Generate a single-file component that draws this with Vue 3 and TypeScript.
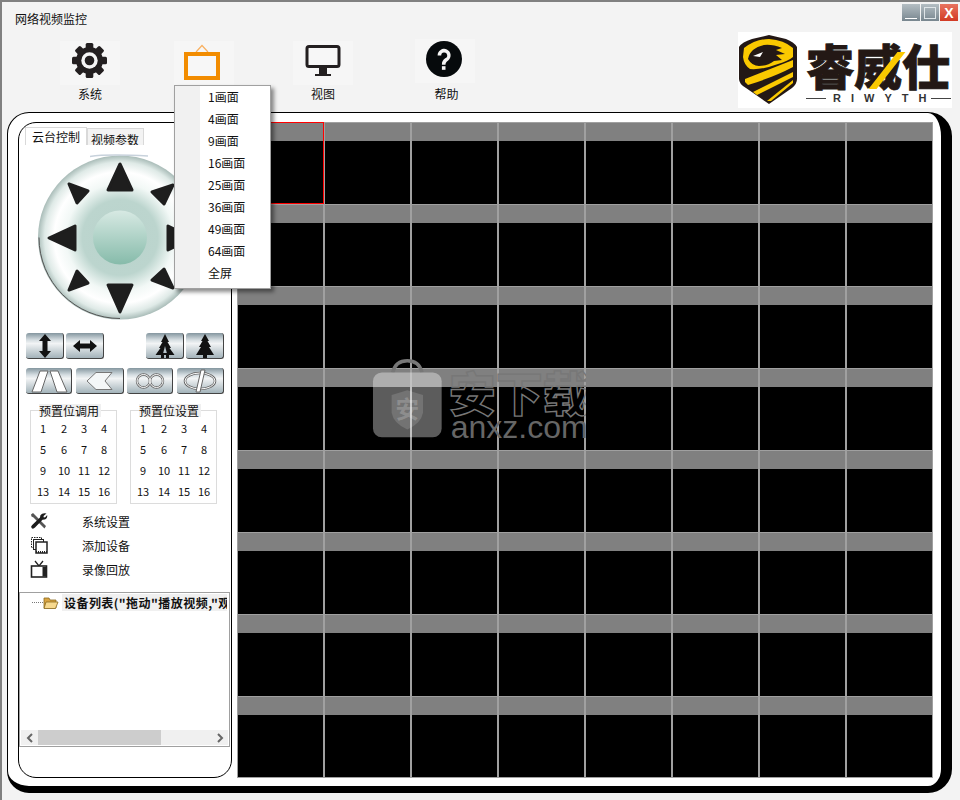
<script setup lang="ts">
const navItems = ['系统', '', '视图', '帮助']
const menuItems = ['1画面', '4画面', '9画面', '16画面', '25画面', '36画面', '49画面', '64画面', '全屏']
const presets = Array.from({ length: 16 }, (_, i) => i + 1)
const cells = Array.from({ length: 64 }, (_, i) => i)
const tools = ['系统设置', '添加设备', '录像回放']
const groups = ['预置位调用', '预置位设置']
</script>

<template>
  <div class="win">
    <!-- title + toolbar -->
    <header class="head">
      <div class="head-left">
        <div class="title">网络视频监控</div>
        <nav class="nav">
          <div v-for="(label, i) in navItems" :key="i" class="nav-item" :class="`nav-${i}`">
            <div class="nav-tile">
              <svg v-if="i === 0" width="40" height="40" viewBox="0 0 40 40">
                <g transform="translate(-0.5 -2.5)">
                  <g fill="#231f20">
                    <circle cx="20" cy="20" r="13.5" />
                    <rect v-for="a in [0, 45, 90, 135, 180, 225, 270, 315]" :key="a" x="16.2" y="2.5" width="7.6" height="8" rx="1.5" :transform="`rotate(${a} 20 20)`" />
                  </g>
                  <circle cx="20" cy="20" r="8.2" fill="#f5f5f5" />
                  <circle cx="20" cy="20" r="4.8" fill="#231f20" />
                </g>
              </svg>
              <svg v-else-if="i === 1" width="40" height="40" viewBox="0 0 40 40">
                <path d="M12 9 L18 2.5 L24 9" fill="none" stroke="#f8b060" stroke-width="1.2" />
                <rect x="2" y="11" width="32" height="24" fill="#f7f7f7" stroke="#f28c00" stroke-width="4" />
              </svg>
              <svg v-else-if="i === 2" width="40" height="40" viewBox="0 0 40 40">
                <rect x="4" y="3.5" width="32" height="20" rx="2" fill="#f7f7f7" stroke="#231f20" stroke-width="3" />
                <path d="M16 25h8v6h4v2H12v-2h4z" fill="#231f20" />
              </svg>
              <svg v-else width="40" height="40" viewBox="0 0 40 40">
                <circle cx="19" cy="20" r="18" fill="#060a0c" />
                <path d="M12.6 16.4a6.5 6.5 0 1 1 10.6 5c-2 1.6-2.7 2.4-2.7 4.3h-3.6c0-3.2 1-4.5 3.3-6.4a3 3 0 1 0-4-2.9z" fill="#f5f5f5" />
                <rect x="16.9" y="27.2" width="3.6" height="3.6" fill="#f5f5f5" />
              </svg>
            </div>
            <div class="nav-label">{{ label }}</div>
          </div>
        </nav>
      </div>

      <div class="head-right">
        <div class="win-btns">
          <div class="win-btn"><span class="ico-min"></span></div>
          <div class="win-btn"><span class="ico-max"></span></div>
          <div class="win-btn close">X</div>
        </div>
        <div class="logo">
          <svg class="shield" width="60" height="70" viewBox="0 0 60 70">
            <path d="M31 0 L48 4 Q56 7 59 12 V44 Q59 49 54 53 L31 69 L8 53 Q1 49 1 44 V12 Q4 7 14 4 Z" fill="#231815" />
            <path d="M6 13 Q18 4 31 4 Q46 5 55 13 V22 Q50 26 40 29 Q24 35 12 34 Q6 30 5 22 Z" fill="#fbc900" />
            <path d="M10 24 Q12 13 26 10 Q34 9 44 13 L38 15 L47 19 L38 20 L44 25 L36 26 Q30 31 21 31 Q14 31 10 24 Z" fill="#231815" />
            <path d="M15 21 L25 17 L22 22 Z" fill="#fff" />
            <path d="M7 44 L55 25 V32 Q36 42 10 50 L7 47 Z" fill="#fbc900" />
            <path d="M15 57 L55 37 V42 L19 60 Z" fill="#fbc900" />
            <path d="M29 66 L55 45 V48 L33 66 Z" fill="#fbc900" />
          </svg>
          <div class="brand">
            <div class="brand-cn">睿威<i class="slash"></i>仕</div>
            <div class="brand-en"><span class="rule"></span><span class="en-text">RIWYTH</span><span class="rule"></span></div>
          </div>
        </div>
      </div>
    </header>

    <!-- main panel -->
    <main class="panel">
      <aside class="side">
        <div class="tabs">
          <div class="tab active">云台控制</div>
          <div class="tab">视频参数</div>
        </div>

        <div class="pad-wrap">
          <svg width="166" height="168" viewBox="0 0 166 168">
            <defs>
              <radialGradient id="disc" cx="50%" cy="50%" r="50%">
                <stop offset="0" stop-color="#b9d3cc" />
                <stop offset="0.46" stop-color="#bcd5ce" />
                <stop offset="0.66" stop-color="#f2f8f6" />
                <stop offset="0.8" stop-color="#ffffff" />
                <stop offset="0.92" stop-color="#dfeae7" />
                <stop offset="1" stop-color="#a9bcb8" />
              </radialGradient>
              <linearGradient id="knob" x1="0" y1="0" x2="0" y2="1">
                <stop offset="0" stop-color="#d7e9e3" />
                <stop offset="1" stop-color="#86bbaa" />
              </linearGradient>
            </defs>
            <circle cx="83" cy="83.5" r="82" fill="url(#disc)" />
            <path d="M2 83.5a81 81 0 0 0 81 81" fill="none" stroke="#555" stroke-width="1" />
            <path d="M53 2.5 Q70 0 111 2" fill="none" stroke="#c8d2dc" stroke-width="1.5" />
            <circle cx="83" cy="83.5" r="27" fill="url(#knob)" />
            <g fill="#1e1e1e" stroke="#1e1e1e" stroke-width="3" stroke-linejoin="round">
              <path d="M83 10 L71 36 H95 Z" />
              <path d="M83 158 L71 131 H95 Z" />
              <path d="M12 84 L38 72 V96 Z" />
              <path d="M156 84 L131 72 V96 Z" />
              <path d="M32 30 L51 37 L40 49 Z" />
              <path d="M136 31 L115 38 L127 50 Z" />
              <path d="M32 136 L51 129 L40 117 Z" />
              <path d="M136 134 L115 126 L127 115 Z" />
            </g>
          </svg>
        </div>

        <div class="btn-row top">
          <div class="btn w38">
            <svg width="14" height="24" viewBox="0 0 14 24"><path d="M7 0 L13 7 H9.5 V17 H13 L7 24 L1 17 H4.5 V7 H1 Z" fill="#111" /></svg>
          </div>
          <div class="btn w38">
            <svg width="24" height="14" viewBox="0 0 24 14"><path d="M0 7 L7 1 V4.5 H17 V1 L24 7 L17 13 V9.5 H7 V13 Z" fill="#111" /></svg>
          </div>
          <div class="grow"></div>
          <div class="btn w38">
            <svg width="22" height="24" viewBox="0 0 22 24"><path d="M11 0 L15 8 H13.5 L17 14 H15.5 L20.5 21 H15 V24 H12 V21 H10 V24 H7 V21 H1.5 L6.5 14 H5 L8.5 8 H7 Z" fill="#111" /><path d="M11 12 L9.2 19 H12.8 Z" fill="#b9c6cc" /></svg>
          </div>
          <div class="btn w38">
            <svg width="18" height="24" viewBox="0 0 18 24"><path d="M9 0 L13 7 H11.5 L15 13 H13 L18 21 H11 V24 H7 V21 H0 L5 13 H3 L6.5 7 H5 Z" fill="#111" /></svg>
          </div>
        </div>

        <div class="btn-row second">
          <div class="btn w46 gap-after">
            <svg width="38" height="24" viewBox="0 0 38 24"><path d="M10 2 H18 L11 23 H2 Z M20 2 H28 L37 23 H27 Z" fill="#fff" stroke="#666" stroke-width="1" /></svg>
          </div>
          <div class="btn w48">
            <svg width="28" height="18" viewBox="0 0 28 18"><path d="M10 0.5 H26 L19 9 L26 17.5 H10 L1 9 Z" fill="#f4f7f8" stroke="#777" stroke-width="1" /></svg>
          </div>
          <div class="btn w46 gap-after">
            <svg width="30" height="16" viewBox="0 0 30 16"><g fill="none" stroke="#666" stroke-width="2.4"><circle cx="8.5" cy="8" r="6.5" /><circle cx="21.5" cy="8" r="6.5" /></g><g fill="none" stroke="#fff" stroke-width="1"><circle cx="8.5" cy="8" r="6.5" /><circle cx="21.5" cy="8" r="6.5" /></g></svg>
          </div>
          <div class="btn w47">
            <svg width="34" height="24" viewBox="0 0 34 24"><ellipse cx="17" cy="12" rx="15" ry="8" fill="none" stroke="#666" stroke-width="2.6" /><ellipse cx="17" cy="12" rx="15" ry="8" fill="none" stroke="#fff" stroke-width="1" /><path d="M18 1 H22 L17 23 H13 Z" fill="#fff" stroke="#666" stroke-width="1" /></svg>
          </div>
        </div>

        <div class="presets">
          <fieldset v-for="g in groups" :key="g" class="preset-box">
            <legend>{{ g }}</legend>
            <div class="num-grid">
              <span v-for="n in presets" :key="n">{{ n }}</span>
            </div>
          </fieldset>
        </div>

        <ul class="tools">
          <li v-for="(t, i) in tools" :key="t">
            <svg width="18" height="18" viewBox="0 0 18 18">
              <g v-if="i === 0">
                <path d="M1 2.5 L3 1 L5 3 L16 14 L14.5 16.5 L3.5 5.5 L1.5 4.5 Z" fill="#555" />
                <path d="M16.5 1.5 L13.5 4 L13.8 5.5 L15.2 5.2 L17.2 3 Q17.6 6.6 14.6 7.6 L12.5 7.8 L5 15.6 Q3 17.6 1.6 16 Q0.4 14.6 2.2 13 L10 5.4 L10.4 3.2 Q12.4 0.6 16.5 1.5 Z" fill="#1c1c1c" />
              </g>
              <g v-else-if="i === 1" fill="#fff" stroke="#222" stroke-width="1">
                <rect x="1.5" y="1.5" width="10" height="10" stroke-dasharray="1.5 1" />
                <rect x="3.5" y="3.5" width="10" height="10" />
                <rect x="6" y="6" width="11" height="11" stroke-width="1.5" />
                <path d="M6 16h11" stroke-width="2" stroke-dasharray="1 1" />
              </g>
              <g v-else>
                <path d="M5 1 L9 6 L13 1" fill="none" stroke="#222" stroke-width="1.3" />
                <rect x="1.5" y="6" width="15" height="11" fill="#fff" stroke="#222" stroke-width="1.6" />
                <rect x="12.5" y="7" width="3.5" height="9.5" fill="#222" />
              </g>
            </svg>
            <span>{{ t }}</span>
          </li>
        </ul>

        <div class="tree">
          <div class="tree-row">
            <span class="dots"></span>
            <svg width="16" height="14" viewBox="0 0 16 14">
              <path d="M1 2h5l1 2h6v8H1z" fill="#d9a441" stroke="#8a6a20" stroke-width="0.8" />
              <path d="M3 6h12l-2.5 6.5H1z" fill="#f7d98e" stroke="#8a6a20" stroke-width="0.8" />
            </svg>
            <span class="tree-text">设备列表("拖动"播放视频,"观看"</span>
          </div>
          <div class="scroll">
            <span class="arr">
              <svg width="8" height="10" viewBox="0 0 8 10"><path d="M6 1 L2 5 L6 9" fill="none" stroke="#666" stroke-width="2" /></svg>
            </span>
            <div class="track"><div class="thumb"></div></div>
            <span class="arr">
              <svg width="8" height="10" viewBox="0 0 8 10"><path d="M2 1 L6 5 L2 9" fill="none" stroke="#666" stroke-width="2" /></svg>
            </span>
          </div>
        </div>
      </aside>

      <section class="grid">
        <div v-for="c in cells" :key="c" class="cell" :class="{ first: c === 0 }">
          <div class="cell-head"></div>
        </div>
      </section>

      <!-- watermark over the grid -->
      <div class="mark">
        <svg width="72" height="82" viewBox="0 0 72 82">
          <path d="M21 14 Q24 2 36 2 Q48 2 51 14" fill="none" stroke="#777" stroke-width="3.5" />
          <rect x="1" y="14" width="70" height="66" rx="9" fill="#fff" fill-opacity="0.36" />
          <path d="M36 32 L52 37 V55 Q50 66 36 72 Q22 66 20 55 V37 Z" fill="#fff" fill-opacity="0.14" />
          <text x="36" y="60" text-anchor="middle" class="mark-glyph">安</text>
        </svg>
        <div class="mark-text">
          <div class="mark-cn">安下载</div>
          <div class="mark-en">anxz.com</div>
        </div>
      </div>
    </main>

    <!-- dropdown from the second toolbar item -->
    <div class="menu">
      <div v-for="m in menuItems" :key="m" class="menu-item">{{ m }}</div>
    </div>
  </div>
</template>

<style>
html,
body {
  margin: 0;
  background: #f3f3f3;
}
</style>

<style scoped>
.win {
  position: relative;
  width: 960px;
  height: 800px;
  box-sizing: border-box;
  background: #f3f3f3;
  border-left: 2px solid #808080;
  border-top: 2px solid #808080;
  font-family: "Noto Sans CJK SC", "Liberation Sans", sans-serif;
  font-size: 12px;
  color: #111;
  overflow: hidden;
}

.head {
  display: flex;
  justify-content: space-between;
  height: 110px;
}

.title {
  padding: 8px 0 0 13px;
  height: 22px;
  line-height: 17px;
}

.nav {
  display: flex;
  margin-left: 58px;
  margin-top: 9px;
}

.nav-item {
  width: 60px;
  display: flex;
  flex-direction: column;
  align-items: center;
}

.nav-1 {
  margin-left: 54px;
}

.nav-2 {
  margin-left: 59px;
}

.nav-3 {
  margin-left: 62px;
}

.nav-tile {
  width: 60px;
  height: 44px;
  background: #f6f6f6;
  display: flex;
  align-items: center;
  justify-content: center;
}

.nav-3 .nav-tile {
  align-items: flex-start;
  margin-top: -2px;
  margin-bottom: 2px;
}

.nav-label {
  line-height: 17px;
}

.nav-3 .nav-label {
  padding-left: 3px;
}

.head-right {
  width: 222px;
  padding-right: 2px;
  box-sizing: border-box;
  display: flex;
  flex-direction: column;
  align-items: flex-end;
}

.win-btns {
  display: flex;
  gap: 1px;
  margin-top: 2px;
  height: 17px;
}

.win-btn {
  width: 18px;
  height: 17px;
  box-sizing: border-box;
  background: linear-gradient(#b4bec3, #78868f);
  display: flex;
  align-items: center;
  justify-content: center;
}

.win-btn.close {
  background: linear-gradient(#e8735f, #d23a24);
  color: #fff;
  font-family: "Liberation Sans", sans-serif;
  font-weight: 700;
  font-size: 14px;
}

.ico-min {
  width: 12px;
  height: 1px;
  background: #fff;
  margin-top: 12px;
}

.ico-max {
  width: 10px;
  height: 10px;
  border: 1px solid #dfe5e8;
}

.logo {
  width: 214px;
  height: 76px;
  margin-top: 11px;
  margin-right: 6px;
  background: #fff;
  display: flex;
  align-items: center;
  box-sizing: border-box;
}

.shield {
  flex: none;
}

.brand {
  align-self: flex-start;
  margin-left: 8px;
  width: 145px;
  padding-top: 6px;
}

.brand-cn {
  position: relative;
  font-size: 48px;
  line-height: 52px;
  height: 52px;
  font-weight: 900;
  color: #231815;
  white-space: nowrap;
  -webkit-text-stroke: 0.8px #231815;
}

.slash {
  position: absolute;
  left: 77px;
  top: 14px;
  width: 8px;
  height: 37px;
  background: #fbc900;
  transform: skewX(-38deg);
}

.brand-en {
  display: flex;
  align-items: center;
  margin-top: 2px;
  font-family: "Liberation Sans", sans-serif;
  font-weight: 700;
  font-size: 11px;
  color: #333;
  line-height: 12px;
}

.en-text {
  letter-spacing: 10px;
  margin: 0 -5px 0 7px;
}

.rule {
  width: 20px;
  height: 1px;
  background: #444;
  flex: none;
}

.panel {
  position: relative;
  width: 945px;
  height: 681px;
  box-sizing: border-box;
  margin-left: 5px;
  background: #fff;
  border-style: solid;
  border-color: #000;
  border-width: 1px 11px 7px 1px;
  border-radius: 22px 24px 24px 22px;
  display: flex;
  padding: 9px 0 8px 10px;
}

.side {
  width: 214px;
  height: 656px;
  box-sizing: border-box;
  border: 1px solid #000;
  border-radius: 18px;
  flex: none;
  padding-top: 4px;
  display: flex;
  flex-direction: column;
}

.tabs {
  display: flex;
  align-items: flex-end;
  height: 18px;
  padding-left: 6px;
  flex: none;
  overflow: hidden;
}

.tab {
  box-sizing: border-box;
  height: 17px;
  padding: 0 3px;
  border: 1px solid #d9d9d9;
  border-bottom: 0;
  line-height: 22px;
  background: #f3f3f3;
  overflow: hidden;
  white-space: nowrap;
  width: 57px;
  flex: none;
}

.tab.active {
  height: 18px;
  width: 62px;
  padding-left: 6px;
  background: #fff;
  line-height: 18px;
}

.pad-wrap {
  margin: 9px 0 0 18px;
  height: 168px;
  flex: none;
}

.pad-wrap svg {
  display: block;
}

.btn-row {
  display: flex;
  padding: 0 7px;
  flex: none;
}

.btn-row.top {
  gap: 2px;
  margin-top: 11px;
}

.btn-row.second {
  gap: 3px;
  margin-top: 9px;
}

.gap-after {
  margin-right: 1px;
}

.grow {
  flex: 1;
}

.btn {
  height: 26px;
  box-sizing: border-box;
  border-radius: 3px;
  background: linear-gradient(#84969f 0, #d6dee2 28%, #f2f4f5 42%, #a3b3ba 100%);
  border-right: 1px solid #444;
  border-bottom: 1px solid #444;
  display: flex;
  align-items: center;
  justify-content: center;
  flex: none;
}

.w38 { width: 38px; }
.w46 { width: 46px; }
.w47 { width: 47px; }
.w48 { width: 48px; }

.presets {
  display: flex;
  gap: 13px;
  padding-left: 11px;
  margin-top: 10px;
  flex: none;
}

.preset-box {
  width: 87px;
  height: 100px;
  box-sizing: border-box;
  margin: 0;
  padding: 0 0 0 1px;
  border: 1px solid #dcdcdc;
}

.preset-box legend {
  padding: 0;
  margin-left: 7px;
  background: #f0f0f0;
  font-size: 12px;
  line-height: 13px;
  width: 62px;
  white-space: nowrap;
}

.num-grid {
  display: grid;
  grid-template-columns: 22px 20px 20px 20px;
  grid-auto-rows: 21px;
  font-size: 11px;
  text-align: center;
  line-height: 21px;
  margin-top: 1px;
}

.tools {
  list-style: none;
  margin: 5px 0 0;
  padding: 0 0 0 11px;
  flex: none;
}

.tools li {
  display: flex;
  align-items: center;
  height: 24px;
}

.tools span {
  margin-left: 34px;
}

.tree {
  margin: 11px 0 0;
  width: 211px;
  height: 155px;
  box-sizing: border-box;
  border: 1px solid #a0a0a0;
  flex: none;
  display: flex;
  flex-direction: column;
  justify-content: space-between;
  padding: 1px;
}

.tree-row {
  display: flex;
  align-items: center;
  height: 17px;
  overflow: hidden;
  white-space: nowrap;
}

.dots {
  width: 11px;
  margin-left: 11px;
  border-top: 1px dotted #777;
  flex: none;
}

.tree-row svg {
  flex: none;
  margin-right: 3px;
}

.tree-text {
  flex: 1;
  min-width: 0;
  overflow: hidden;
  background: #f0f0f0;
  font-weight: 700;
  line-height: 17px;
  padding-left: 2px;
  margin-right: 1px;
  letter-spacing: 0.45px;
}

.scroll {
  display: flex;
  align-items: center;
  height: 15px;
  background: #f0f0f0;
}

.arr {
  width: 17px;
  display: flex;
  justify-content: center;
  flex: none;
}

.track {
  flex: 1;
  height: 15px;
}

.thumb {
  width: 123px;
  height: 15px;
  background: #cdcdcd;
}

.grid {
  margin-left: 5px;
  width: 696px;
  height: 656px;
  flex: none;
  display: grid;
  grid-template-columns: 86px repeat(6, 87px) 88px;
  grid-template-rows: repeat(8, 82px);
  background: #000;
}

.cell {
  position: relative;
  box-sizing: border-box;
  border-left: 2px solid #a0a0a0;
  background: #000;
}

.cell:nth-child(8n + 1) {
  border-left-width: 1px;
}

.cell:nth-last-child(-n + 8) {
  border-bottom: 1px solid #a0a0a0;
}

.cell:nth-child(8n) {
  border-right: 1px solid #a0a0a0;
}

.cell-head {
  height: 19px;
  background: #808080;
  border-top: 1px solid #a0a0a0;
  box-sizing: border-box;
}

/* selected cell gets a thin red frame */
.cell.first::after {
  content: "";
  position: absolute;
  left: -1px;
  top: 0;
  right: -1px;
  bottom: 0;
  border: 1px solid #f00;
  z-index: 1;
}

/* watermark is laid over the video cells */
.mark {
  position: absolute;
  left: 364px;
  top: 245px;
  width: 214px;
  height: 84px;
  display: flex;
  gap: 6px;
  overflow: hidden;
  pointer-events: none;
  z-index: 2;
}

.mark-glyph {
  font-size: 24px;
  fill: #fff;
  fill-opacity: 0.2;
  font-weight: 700;
}

.mark-text {
  width: 140px;
  overflow: hidden;
}

.mark-cn {
  font-size: 47px;
  line-height: 48px;
  margin-top: 9px;
  font-weight: 900;
  color: transparent;
  -webkit-text-stroke: 1.4px #777;
  white-space: nowrap;
}

.mark-en {
  font-family: "Liberation Sans", sans-serif;
  font-size: 32px;
  line-height: 24px;
  color: #666;
  white-space: nowrap;
  margin-left: 2px;
}

.menu {
  position: absolute;
  left: 172px;
  top: 83px;
  width: 97px;
  height: 204px;
  box-sizing: border-box;
  padding: 0 2px;
  border: 1px solid #a0a0a0;
  background: linear-gradient(90deg, #f1f1f1 25px, #fff 25px);
  box-shadow: 3px 3px 4px rgba(0, 0, 0, 0.45);
  z-index: 3;
}

.menu-item {
  height: 22px;
  line-height: 22px;
  padding-left: 31px;
}
</style>
